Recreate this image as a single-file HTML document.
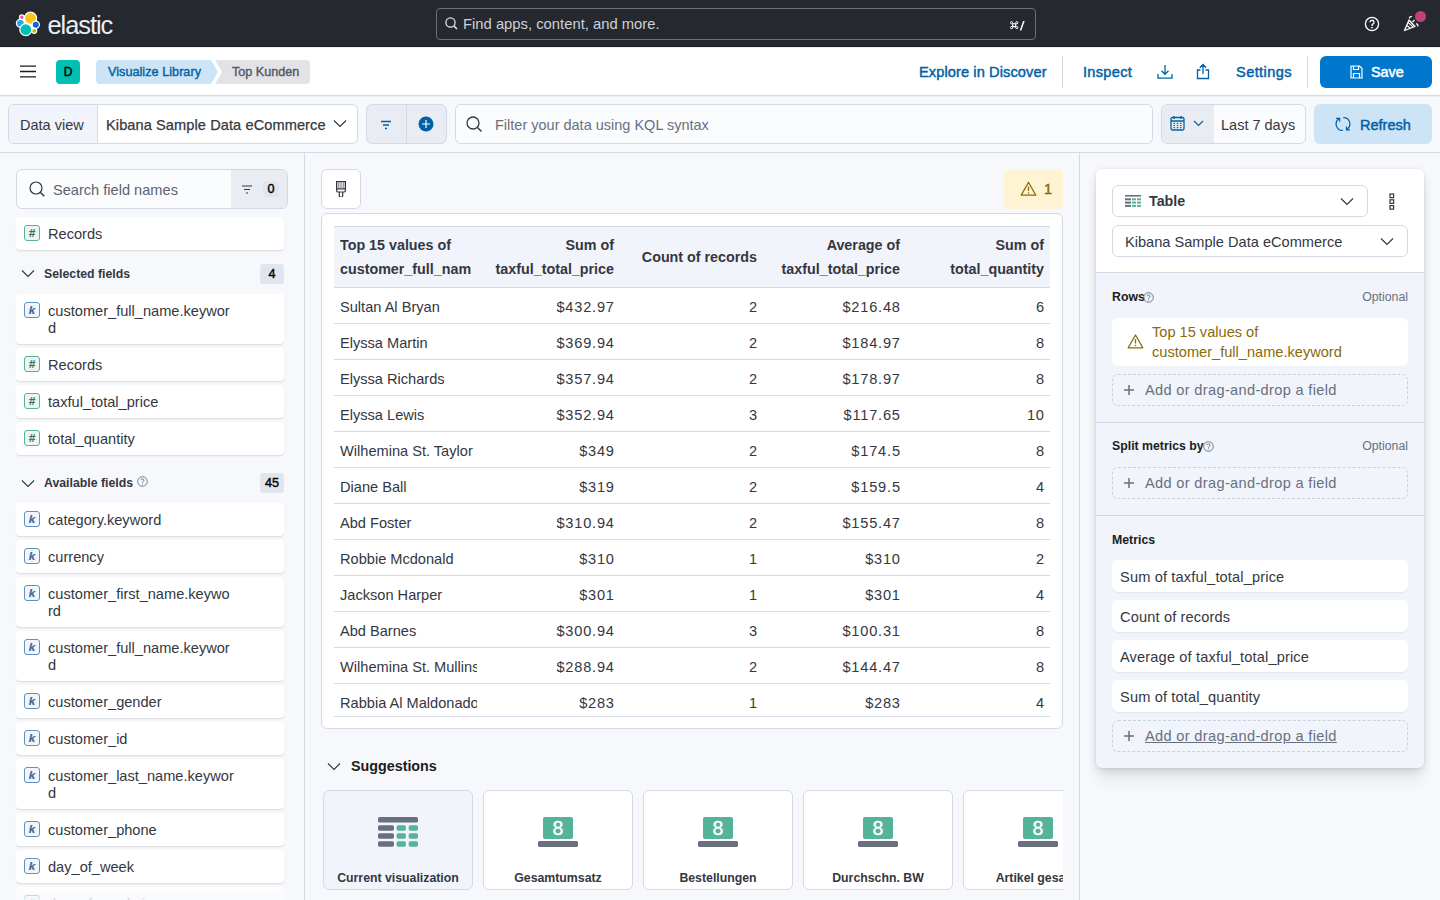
<!DOCTYPE html>
<html><head><meta charset="utf-8">
<style>
*{box-sizing:border-box;margin:0;padding:0}
html,body{width:1440px;height:900px;overflow:hidden;background:#f7f8fc;font-family:"Liberation Sans",sans-serif;color:#343741;font-size:14px}
.a{position:absolute}
.nw{white-space:nowrap}
svg{display:block}
/* header */
#hdr{left:0;top:0;width:1440px;height:46px;background:#25282f}
#hdrb{left:0;top:46px;width:1440px;height:1px;background:#1a1c21}
#hdrs{left:0;top:47px;width:1440px;height:1px;background:#eef1f8}
#appbar{left:0;top:48px;width:1440px;height:47px;background:#fff}
#appbb{left:0;top:95px;width:1440px;height:1px;background:#d3dae6}
#appbs{left:0;top:96px;width:1440px;height:1px;background:#eceef2}
#qbb{left:0;top:152px;width:1440px;height:1px;background:#d3dae6}
.link{color:#0061a6;font-weight:400;font-size:14.6px;-webkit-text-stroke-width:.45px}
.med{font-weight:400;-webkit-text-stroke-width:.45px}
.vdiv{width:1px;background:#d3dae6}
.box{border:1px solid #d3dae6;border-radius:6px}
</style>
<style>
.fi{position:absolute;left:16px;width:268px;background:#fff;border-radius:4px;box-shadow:0 1px 1px rgba(0,0,0,.09),0 2px 2px rgba(0,0,0,.025)}
.fi .ic{position:absolute;left:8px;top:8px;width:16px;height:16px;border-radius:3px;font-weight:700;font-style:italic;text-align:center;line-height:14px;font-size:11.5px;-webkit-text-stroke-width:.2px}
.ick{border:1px solid #6092c0;background:#f1f6fb;color:#3f6a98}
.ich{border:1px solid #54b399;background:#eef6f3;color:#387765}
.fi .tx{position:absolute;left:32px;top:9px;font-size:14.6px;line-height:17px;color:#343741;white-space:nowrap}
.sh{position:absolute;font-size:12.3px;font-weight:700;color:#343741;line-height:16px;white-space:nowrap}
.th{position:absolute;font-size:14.3px;font-weight:700;line-height:24px;color:#343741;white-space:nowrap}
.td{position:absolute;font-size:14.6px;line-height:17px;color:#343741;white-space:nowrap}
.badge{position:absolute;height:20px;border-radius:3px;background:#e0e5ee;font-size:12.6px;font-weight:400;-webkit-text-stroke-width:.4px;color:#000;text-align:center;line-height:20px}
</style>
</head><body>
<!-- ===== top dark header ===== -->
<div id="hdr" class="a"></div><div id="hdrb" class="a"></div><div id="hdrs" class="a"></div>
<svg class="a" style="left:14px;top:10px" width="28" height="28" viewBox="0 0 28 28">
 <circle cx="14.5" cy="14.5" r="7" fill="#fff"/>
 <g stroke="#fff" stroke-width="1.2">
 <circle cx="16.5" cy="8.3" r="6.1" fill="#fec514"/>
 <circle cx="7.8" cy="7.2" r="2.3" fill="#f04e98"/>
 <circle cx="6.4" cy="13.3" r="4" fill="#1ba9f5"/>
 <circle cx="21.8" cy="14.7" r="3.6" fill="#0b64dd"/>
 <circle cx="11.8" cy="19.7" r="6" fill="#00bfb3"/>
 <circle cx="20.2" cy="20.8" r="2.5" fill="#93c90e"/>
 </g>
</svg>
<div class="a nw" style="left:47.5px;top:11px;font-size:25.4px;color:#eceef1;letter-spacing:-1.05px;font-weight:400">elastic</div>
<div class="a box" style="left:436px;top:8px;width:600px;height:32px;border-color:#6b6f78;border-radius:4px;background:#25282f"></div>
<svg class="a" style="left:445px;top:17px" width="13" height="13" viewBox="0 0 13 13"><circle cx="5.5" cy="5.5" r="4.6" fill="none" stroke="#dfe5ef" stroke-width="1.3"/><path d="M9 9 L12 12" stroke="#dfe5ef" stroke-width="1.6"/></svg>
<div class="a nw" style="left:463px;top:16px;font-size:14.8px;color:#cdd1d9">Find apps, content, and more.</div>
<svg class="a" style="left:1009.5px;top:20.5px" width="16" height="10" viewBox="0 0 16 10"><path d="M2.7 2.7h3v2.9h-3z" fill="none" stroke="#fff" stroke-width="1.1"/><circle cx="1.6" cy="1.7" r="1.1" fill="none" stroke="#fff" stroke-width="1"/><circle cx="6.8" cy="1.7" r="1.1" fill="none" stroke="#fff" stroke-width="1"/><circle cx="1.6" cy="6.6" r="1.1" fill="none" stroke="#fff" stroke-width="1"/><circle cx="6.8" cy="6.6" r="1.1" fill="none" stroke="#fff" stroke-width="1"/><path d="M10.5 9.6 14 -.2" stroke="#fff" stroke-width="1.5"/></svg>
<svg class="a" style="left:1364px;top:16px" width="16" height="16" viewBox="0 0 16 16"><circle cx="8" cy="8" r="6.6" fill="none" stroke="#fff" stroke-width="1.3"/><path d="M6 6.3a2 2 0 1 1 2.8 1.8c-.5.3-.8.6-.8 1.2v.6" fill="none" stroke="#fff" stroke-width="1.3"/><circle cx="8" cy="11.6" r=".9" fill="#fff"/></svg>
<svg class="a" style="left:1403px;top:15px" width="18" height="17" viewBox="0 0 18 17"><path d="M1.5 15.5 L6 5 L12 11.5 Z" fill="none" stroke="#fff" stroke-width="1.3" stroke-linejoin="round"/><path d="M4 10.5l3.5 3M5.3 7.5l4.6 4.4" stroke="#fff" stroke-width="1.1"/><path d="M6.5 3.5a1.5 1.5 0 0 1 2.5-1.5M13 9a1.5 1.5 0 0 1 1.5 2.5M9.5 7l2-2" fill="none" stroke="#fff" stroke-width="1.2"/></svg>
<div class="a" style="left:1415px;top:11px;width:11px;height:11px;border-radius:50%;background:#c4407c"></div>

<!-- ===== app bar ===== -->
<div id="appbar" class="a"></div><div id="appbb" class="a"></div><div id="appbs" class="a"></div>
<svg class="a" style="left:20px;top:65px" width="16" height="13" viewBox="0 0 16 13"><path d="M0 1.2h16M0 6.5h16M0 11.8h16" stroke="#1a1c21" stroke-width="1.3"/></svg>
<div class="a" style="left:56px;top:60px;width:24px;height:24px;border-radius:4px;background:#00bfb3;color:#000;font-size:12px;font-weight:400;-webkit-text-stroke-width:.45px;text-align:center;line-height:24px">D</div>
<svg class="a" style="left:96px;top:60px" width="216" height="24" viewBox="0 0 216 24">
 <path d="M4 0 H115 L122 12 L115 24 H4 A4 4 0 0 1 0 20 V4 A4 4 0 0 1 4 0Z" fill="#cce4f5"/>
 <path d="M119 0 H210 A4 4 0 0 1 214 4 V20 A4 4 0 0 1 210 24 H119 L126 12 Z" fill="#e2e3e7"/>
</svg>
<div class="a nw" style="left:108px;top:65px;font-size:12.6px;font-weight:400;-webkit-text-stroke-width:.4px;color:#0061a6;letter-spacing:.05px">Visualize Library</div>
<div class="a nw" style="left:232px;top:65px;font-size:12.6px;font-weight:400;-webkit-text-stroke-width:.4px;color:#535966">Top Kunden</div>

<div class="a nw link" style="left:919px;top:64px;letter-spacing:.1px">Explore in Discover</div>
<div class="a vdiv" style="left:1062px;top:56px;height:32px"></div>
<div class="a nw link" style="left:1083px;top:64px;letter-spacing:.3px">Inspect</div>
<svg class="a" style="left:1157px;top:64px" width="16" height="16" viewBox="0 0 16 16"><path d="M8 1v9M4.5 6.8 8 10.3l3.5-3.5M1 10v4.2h14V10" fill="none" stroke="#0061a6" stroke-width="1.3"/></svg>
<svg class="a" style="left:1196px;top:63px" width="14" height="17" viewBox="0 0 14 17"><path d="M7 11V1.5M3.8 4.7 7 1.5l3.2 3.2M4.5 7H1.5v8.5h11V7H9.5" fill="none" stroke="#0061a6" stroke-width="1.3"/></svg>
<div class="a nw link" style="left:1236px;top:64px;letter-spacing:.4px">Settings</div>
<div class="a vdiv" style="left:1307px;top:56px;height:32px"></div>
<div class="a" style="left:1320px;top:56px;width:112px;height:32px;background:#0077cc;border-radius:6px"></div>
<svg class="a" style="left:1350px;top:65px" width="13" height="14" viewBox="0 0 13 14"><path d="M1 1h8.5l2.5 2.5V13H1z M3.5 1v3.5h5V1 M3.5 13V8.5h6V13" fill="none" stroke="#fff" stroke-width="1.2"/></svg>
<div class="a nw" style="left:1371px;top:64px;font-size:14.4px;font-weight:400;-webkit-text-stroke-width:.5px;color:#fff">Save</div>

<!-- ===== query bar ===== -->
<div id="qbb" class="a"></div>
<div class="a box" style="left:8px;top:104px;width:350px;height:40px;background:#fff;overflow:hidden">
 <div class="a" style="left:0;top:0;width:89px;height:38px;background:#f1f4fa;border-right:1px solid #d3dae6"></div>
</div>
<div class="a nw" style="left:20px;top:116.5px;font-size:14.5px;color:#343741">Data view</div>
<div class="a nw" style="left:106px;top:116.5px;font-size:14.6px;color:#343741;font-weight:400;-webkit-text-stroke-width:.25px;letter-spacing:.08px">Kibana Sample Data eCommerce</div>
<svg class="a" style="left:333px;top:119px" width="14" height="9" viewBox="0 0 14 9"><path d="M1 1.5l6 6 6-6" fill="none" stroke="#343741" stroke-width="1.2"/></svg>
<div class="a box" style="left:366px;top:104px;width:81px;height:40px;background:#e9edf3;overflow:hidden">
 <div class="a" style="left:39px;top:0;width:1px;height:38px;background:#d3dae6"></div>
</div>
<svg class="a" style="left:380px;top:120px" width="12" height="10" viewBox="0 0 12 10"><path d="M1 1.5h10M3 5h6M5 8.5h2" stroke="#0061a6" stroke-width="1.3"/></svg>
<svg class="a" style="left:418px;top:116px" width="16" height="16" viewBox="0 0 16 16"><circle cx="8" cy="8" r="7.5" fill="#0061a6"/><path d="M8 4v8M4 8h8" stroke="#fff" stroke-width="1.2"/></svg>
<div class="a box" style="left:455px;top:104px;width:698px;height:40px;background:#fbfcfd"></div>
<svg class="a" style="left:466px;top:116px" width="17" height="17" viewBox="0 0 17 17"><circle cx="7" cy="7" r="6" fill="none" stroke="#343741" stroke-width="1.3"/><path d="M11.5 11.5l4 4" stroke="#343741" stroke-width="1.5"/></svg>
<div class="a nw" style="left:495px;top:117px;font-size:14.5px;color:#69707d">Filter your data using KQL syntax</div>
<div class="a box" style="left:1161px;top:104px;width:145px;height:40px;background:#fbfcfd;overflow:hidden">
 <div class="a" style="left:0;top:0;width:52px;height:38px;background:#e9edf3;border-right:1px solid #e9edf3"></div>
</div>
<svg class="a" style="left:1170px;top:115px" width="15" height="16" viewBox="0 0 15 16"><rect x="1" y="2.5" width="13" height="12.5" rx="1.5" fill="none" stroke="#0061a6" stroke-width="1.3"/><path d="M1 6h13M4 1v3M11 1v3" stroke="#0061a6" stroke-width="1.3"/><path d="M3.5 8.3h1.5M6.8 8.3h1.5M10 8.3h1.5M3.5 10.5h1.5M6.8 10.5h1.5M10 10.5h1.5M3.5 12.7h1.5M6.8 12.7h1.5M10 12.7h1.5" stroke="#0061a6" stroke-width="1.2"/></svg>
<svg class="a" style="left:1193px;top:120px" width="11" height="7" viewBox="0 0 11 7"><path d="M1 1l4.5 4.5L10 1" fill="none" stroke="#0061a6" stroke-width="1.2"/></svg>
<div class="a nw" style="left:1221px;top:117px;font-size:14.5px;color:#343741">Last 7 days</div>
<div class="a" style="left:1314px;top:104px;width:118px;height:40px;background:#cce4f5;border-radius:6px"></div>
<svg class="a" style="left:1335px;top:116px" width="16" height="16" viewBox="0 0 16 16"><path d="M4.4 2.6A6.3 6.3 0 0 0 7.8 14.4M1.1 2.4h3.6v3.3" fill="none" stroke="#0061a6" stroke-width="1.15"/><path d="M8.3 1.6A6.3 6.3 0 0 1 11.6 13.4M15 13.8h-3.5v-3.4" fill="none" stroke="#0061a6" stroke-width="1.15"/></svg>
<div class="a nw link" style="left:1360px;top:117px;font-size:14.5px">Refresh</div>

<!-- LEFT -->
<div class="a box" style="left:16px;top:169px;width:272px;height:40px;background:#fbfcfd;overflow:hidden"><div class="a" style="left:214px;top:0;width:58px;height:38px;background:#e9edf3"></div></div>
<svg class="a" style="left:29px;top:181px" width="17" height="17" viewBox="0 0 17 17"><circle cx="7" cy="7" r="6" fill="none" stroke="#343741" stroke-width="1.2"/><path d="M11.3 11.3l4 4" stroke="#343741" stroke-width="1.5"/></svg>
<div class="a nw" style="left:53px;top:182px;font-size:14.6px;color:#5e6473">Search field names</div>
<svg class="a" style="left:241px;top:185px" width="12" height="9" viewBox="0 0 12 9"><path d="M1 1h10M3 4.5h6M5 8h2" stroke="#343741" stroke-width="1.1"/></svg>
<div class="a" style="left:263px;top:181px;width:16px;height:16px;border-radius:3px;background:#e0e5ee;font-size:12.6px;font-weight:400;-webkit-text-stroke-width:.4px;color:#000;text-align:center;line-height:16px">0</div>
<div class="fi" style="top:217px;height:33px"><div class="ic ich">#</div><div class="tx">Records</div></div>
<svg class="a" style="left:21px;top:269px" width="14" height="9" viewBox="0 0 14 9"><path d="M1 1.5l6 6 6-6" fill="none" stroke="#343741" stroke-width="1.1"/></svg>
<div class="sh" style="left:44px;top:266px">Selected fields</div>
<div class="badge" style="left:260px;top:264px;width:24px">4</div>
<div class="fi" style="top:294px;height:50px"><div class="ic ick">k</div><div class="tx">customer_full_name.keywor<br>d</div></div>
<div class="fi" style="top:348px;height:33px"><div class="ic ich">#</div><div class="tx">Records</div></div>
<div class="fi" style="top:385px;height:33px"><div class="ic ich">#</div><div class="tx">taxful_total_price</div></div>
<div class="fi" style="top:422px;height:33px"><div class="ic ich">#</div><div class="tx">total_quantity</div></div>
<svg class="a" style="left:21px;top:479px" width="14" height="9" viewBox="0 0 14 9"><path d="M1 1.5l6 6 6-6" fill="none" stroke="#343741" stroke-width="1.1"/></svg>
<div class="sh" style="left:44px;top:475px">Available fields</div>
<svg class="a" style="left:137px;top:476px" width="11" height="11" viewBox="0 0 11 11"><circle cx="5.5" cy="5.5" r="4.8" fill="none" stroke="#69707d" stroke-width=".9"/><path d="M4 4.3a1.5 1.5 0 1 1 2 1.4c-.3.2-.5.4-.5.8v.4" fill="none" stroke="#69707d" stroke-width=".9"/><circle cx="5.5" cy="8" r=".55" fill="#69707d"/></svg>
<div class="badge" style="left:260px;top:473px;width:24px">45</div>
<div class="fi" style="top:503px;height:33px"><div class="ic ick">k</div><div class="tx">category.keyword</div></div>
<div class="fi" style="top:540px;height:33px"><div class="ic ick">k</div><div class="tx">currency</div></div>
<div class="fi" style="top:577px;height:50px"><div class="ic ick">k</div><div class="tx">customer_first_name.keywo<br>rd</div></div>
<div class="fi" style="top:631px;height:50px"><div class="ic ick">k</div><div class="tx">customer_full_name.keywor<br>d</div></div>
<div class="fi" style="top:685px;height:33px"><div class="ic ick">k</div><div class="tx">customer_gender</div></div>
<div class="fi" style="top:722px;height:33px"><div class="ic ick">k</div><div class="tx">customer_id</div></div>
<div class="fi" style="top:759px;height:50px"><div class="ic ick">k</div><div class="tx">customer_last_name.keywor<br>d</div></div>
<div class="fi" style="top:813px;height:33px"><div class="ic ick">k</div><div class="tx">customer_phone</div></div>
<div class="fi" style="top:850px;height:33px"><div class="ic ick">k</div><div class="tx">day_of_week</div></div>
<div class="fi" style="top:887px;height:33px"><div class="ic ich">#</div><div class="tx">day_of_week_i</div></div>
<div class="a" style="left:0;top:884px;width:304px;height:16px;background:linear-gradient(rgba(248,249,252,0),rgba(248,249,252,.85))"></div>
<div class="a vdiv" style="left:304px;top:153px;height:747px"></div>
<!-- CENTER -->
<div class="a box" style="left:321px;top:169px;width:40px;height:40px;background:#fff"></div>
<svg class="a" style="left:336px;top:181px" width="10" height="16" viewBox="0 0 10 16"><path d="M.6.6h8.8v7.2H.6z" fill="none" stroke="#343741" stroke-width="1.2"/><path d="M.6 7.8v1.6c0 1 .8 1.6 1.6 1.6h5.6c.8 0 1.6-.6 1.6-1.6V7.8" fill="none" stroke="#343741" stroke-width="1.2"/><path d="M3.3 11v3.6a1.7 1.7 0 0 0 3.4 0V11" fill="none" stroke="#343741" stroke-width="1.2"/><path d="M2.3 1.5v5.5M4.1 1.5v5.5M5.9 1.5v5.5M7.7 1.5v5.5" stroke="#343741" stroke-width=".6"/></svg>
<div class="a" style="left:1004px;top:169px;width:59px;height:40px;background:#fef3d3;border-radius:6px"></div>
<svg class="a" style="left:1020px;top:181px" width="17" height="16" viewBox="0 0 17 16"><path d="M8.5 1.3 1.2 14.2h14.6z" fill="none" stroke="#8a6a0a" stroke-width="1.3" stroke-linejoin="round"/><path d="M8.5 5.5v4.5" stroke="#8a6a0a" stroke-width="1.3"/><circle cx="8.5" cy="12" r=".8" fill="#8a6a0a"/></svg>
<div class="a nw" style="left:1044px;top:181px;font-size:14.6px;color:#8a6a0a;font-weight:400;-webkit-text-stroke-width:.45px">1</div>
<div class="a box" style="left:321px;top:213px;width:742px;height:516px;background:#fff"></div>
<div class="a" style="left:334px;top:226px;width:716px;height:62px;background:#f1f4fa;border-top:1px solid #d3dae6;border-bottom:1px solid #d3dae6"></div>
<div class="th" style="left:340px;top:233px;width:143px;overflow:hidden">Top 15 values of<br>customer_full_nam</div>
<div class="th" style="left:483px;top:233px;width:131px;text-align:right">Sum of<br>taxful_total_price</div>
<div class="th" style="left:620px;top:245px;width:137px;text-align:right">Count of records</div>
<div class="th" style="left:763px;top:233px;width:137px;text-align:right">Average of<br>taxful_total_price</div>
<div class="th" style="left:906px;top:233px;width:138px;text-align:right">Sum of<br>total_quantity</div>
<div class="a" style="left:334px;top:323px;width:716px;height:1px;background:#d3dae6"></div>
<div class="td" style="left:340px;top:299px;width:137px;overflow:hidden">Sultan Al Bryan</div>
<div class="td" style="left:483px;top:299px;width:131.8px;text-align:right;letter-spacing:.8px">$432.97</div>
<div class="td" style="left:620px;top:299px;width:137.8px;text-align:right;letter-spacing:.8px">2</div>
<div class="td" style="left:763px;top:299px;width:137.8px;text-align:right;letter-spacing:.8px">$216.48</div>
<div class="td" style="left:906px;top:299px;width:138.8px;text-align:right;letter-spacing:.8px">6</div>
<div class="a" style="left:334px;top:359px;width:716px;height:1px;background:#d3dae6"></div>
<div class="td" style="left:340px;top:335px;width:137px;overflow:hidden">Elyssa Martin</div>
<div class="td" style="left:483px;top:335px;width:131.8px;text-align:right;letter-spacing:.8px">$369.94</div>
<div class="td" style="left:620px;top:335px;width:137.8px;text-align:right;letter-spacing:.8px">2</div>
<div class="td" style="left:763px;top:335px;width:137.8px;text-align:right;letter-spacing:.8px">$184.97</div>
<div class="td" style="left:906px;top:335px;width:138.8px;text-align:right;letter-spacing:.8px">8</div>
<div class="a" style="left:334px;top:395px;width:716px;height:1px;background:#d3dae6"></div>
<div class="td" style="left:340px;top:371px;width:137px;overflow:hidden">Elyssa Richards</div>
<div class="td" style="left:483px;top:371px;width:131.8px;text-align:right;letter-spacing:.8px">$357.94</div>
<div class="td" style="left:620px;top:371px;width:137.8px;text-align:right;letter-spacing:.8px">2</div>
<div class="td" style="left:763px;top:371px;width:137.8px;text-align:right;letter-spacing:.8px">$178.97</div>
<div class="td" style="left:906px;top:371px;width:138.8px;text-align:right;letter-spacing:.8px">8</div>
<div class="a" style="left:334px;top:431px;width:716px;height:1px;background:#d3dae6"></div>
<div class="td" style="left:340px;top:407px;width:137px;overflow:hidden">Elyssa Lewis</div>
<div class="td" style="left:483px;top:407px;width:131.8px;text-align:right;letter-spacing:.8px">$352.94</div>
<div class="td" style="left:620px;top:407px;width:137.8px;text-align:right;letter-spacing:.8px">3</div>
<div class="td" style="left:763px;top:407px;width:137.8px;text-align:right;letter-spacing:.8px">$117.65</div>
<div class="td" style="left:906px;top:407px;width:138.8px;text-align:right;letter-spacing:.8px">10</div>
<div class="a" style="left:334px;top:467px;width:716px;height:1px;background:#d3dae6"></div>
<div class="td" style="left:340px;top:443px;width:137px;overflow:hidden">Wilhemina St. Taylor</div>
<div class="td" style="left:483px;top:443px;width:131.8px;text-align:right;letter-spacing:.8px">$349</div>
<div class="td" style="left:620px;top:443px;width:137.8px;text-align:right;letter-spacing:.8px">2</div>
<div class="td" style="left:763px;top:443px;width:137.8px;text-align:right;letter-spacing:.8px">$174.5</div>
<div class="td" style="left:906px;top:443px;width:138.8px;text-align:right;letter-spacing:.8px">8</div>
<div class="a" style="left:334px;top:503px;width:716px;height:1px;background:#d3dae6"></div>
<div class="td" style="left:340px;top:479px;width:137px;overflow:hidden">Diane Ball</div>
<div class="td" style="left:483px;top:479px;width:131.8px;text-align:right;letter-spacing:.8px">$319</div>
<div class="td" style="left:620px;top:479px;width:137.8px;text-align:right;letter-spacing:.8px">2</div>
<div class="td" style="left:763px;top:479px;width:137.8px;text-align:right;letter-spacing:.8px">$159.5</div>
<div class="td" style="left:906px;top:479px;width:138.8px;text-align:right;letter-spacing:.8px">4</div>
<div class="a" style="left:334px;top:539px;width:716px;height:1px;background:#d3dae6"></div>
<div class="td" style="left:340px;top:515px;width:137px;overflow:hidden">Abd Foster</div>
<div class="td" style="left:483px;top:515px;width:131.8px;text-align:right;letter-spacing:.8px">$310.94</div>
<div class="td" style="left:620px;top:515px;width:137.8px;text-align:right;letter-spacing:.8px">2</div>
<div class="td" style="left:763px;top:515px;width:137.8px;text-align:right;letter-spacing:.8px">$155.47</div>
<div class="td" style="left:906px;top:515px;width:138.8px;text-align:right;letter-spacing:.8px">8</div>
<div class="a" style="left:334px;top:575px;width:716px;height:1px;background:#d3dae6"></div>
<div class="td" style="left:340px;top:551px;width:137px;overflow:hidden">Robbie Mcdonald</div>
<div class="td" style="left:483px;top:551px;width:131.8px;text-align:right;letter-spacing:.8px">$310</div>
<div class="td" style="left:620px;top:551px;width:137.8px;text-align:right;letter-spacing:.8px">1</div>
<div class="td" style="left:763px;top:551px;width:137.8px;text-align:right;letter-spacing:.8px">$310</div>
<div class="td" style="left:906px;top:551px;width:138.8px;text-align:right;letter-spacing:.8px">2</div>
<div class="a" style="left:334px;top:611px;width:716px;height:1px;background:#d3dae6"></div>
<div class="td" style="left:340px;top:587px;width:137px;overflow:hidden">Jackson Harper</div>
<div class="td" style="left:483px;top:587px;width:131.8px;text-align:right;letter-spacing:.8px">$301</div>
<div class="td" style="left:620px;top:587px;width:137.8px;text-align:right;letter-spacing:.8px">1</div>
<div class="td" style="left:763px;top:587px;width:137.8px;text-align:right;letter-spacing:.8px">$301</div>
<div class="td" style="left:906px;top:587px;width:138.8px;text-align:right;letter-spacing:.8px">4</div>
<div class="a" style="left:334px;top:647px;width:716px;height:1px;background:#d3dae6"></div>
<div class="td" style="left:340px;top:623px;width:137px;overflow:hidden">Abd Barnes</div>
<div class="td" style="left:483px;top:623px;width:131.8px;text-align:right;letter-spacing:.8px">$300.94</div>
<div class="td" style="left:620px;top:623px;width:137.8px;text-align:right;letter-spacing:.8px">3</div>
<div class="td" style="left:763px;top:623px;width:137.8px;text-align:right;letter-spacing:.8px">$100.31</div>
<div class="td" style="left:906px;top:623px;width:138.8px;text-align:right;letter-spacing:.8px">8</div>
<div class="a" style="left:334px;top:683px;width:716px;height:1px;background:#d3dae6"></div>
<div class="td" style="left:340px;top:659px;width:137px;overflow:hidden">Wilhemina St. Mullins</div>
<div class="td" style="left:483px;top:659px;width:131.8px;text-align:right;letter-spacing:.8px">$288.94</div>
<div class="td" style="left:620px;top:659px;width:137.8px;text-align:right;letter-spacing:.8px">2</div>
<div class="td" style="left:763px;top:659px;width:137.8px;text-align:right;letter-spacing:.8px">$144.47</div>
<div class="td" style="left:906px;top:659px;width:138.8px;text-align:right;letter-spacing:.8px">8</div>
<div class="a" style="left:334px;top:716px;width:716px;height:1px;background:#d3dae6"></div>
<div class="td" style="left:340px;top:695px;width:137px;overflow:hidden">Rabbia Al Maldonado</div>
<div class="td" style="left:483px;top:695px;width:131.8px;text-align:right;letter-spacing:.8px">$283</div>
<div class="td" style="left:620px;top:695px;width:137.8px;text-align:right;letter-spacing:.8px">1</div>
<div class="td" style="left:763px;top:695px;width:137.8px;text-align:right;letter-spacing:.8px">$283</div>
<div class="td" style="left:906px;top:695px;width:138.8px;text-align:right;letter-spacing:.8px">4</div>
<svg class="a" style="left:327px;top:762px" width="14" height="9" viewBox="0 0 14 9"><path d="M1 1.5l6 6 6-6" fill="none" stroke="#343741" stroke-width="1.1"/></svg>
<div class="a nw" style="left:351px;top:758px;font-size:14.3px;font-weight:700;color:#1a1c21">Suggestions</div>
<div class="a" style="left:306px;top:780px;width:757px;height:120px;overflow:hidden">
<div class="a" style="left:17px;top:10px;width:150px;height:100px;border:1px solid #d3dae6;border-radius:6px;background:#f1f4fa"></div>
<svg class="a" style="left:72px;top:37px" width="40" height="30" viewBox="0 0 40 30"><rect x="0" y="0" width="40" height="5.6" rx="1.6" fill="#69707d"/><rect x="0" y="8.3" width="16" height="5.4" rx="1.6" fill="#69707d"/><rect x="18.6" y="8.3" width="9.3" height="5.4" rx="1.6" fill="#54b399"/><rect x="30.7" y="8.3" width="9.3" height="5.4" rx="1.6" fill="#54b399"/><rect x="0" y="16.3" width="16" height="5.4" rx="1.6" fill="#69707d"/><rect x="18.6" y="16.3" width="9.3" height="5.4" rx="1.6" fill="#54b399"/><rect x="30.7" y="16.3" width="9.3" height="5.4" rx="1.6" fill="#54b399"/><rect x="0" y="24.3" width="16" height="5.4" rx="1.6" fill="#69707d"/><rect x="18.6" y="24.3" width="9.3" height="5.4" rx="1.6" fill="#54b399"/><rect x="30.7" y="24.3" width="9.3" height="5.4" rx="1.6" fill="#54b399"/></svg>
<div class="a nw" style="left:17px;top:91px;width:150px;text-align:center;font-size:12.3px;font-weight:700;color:#343741">Current visualization</div>
<div class="a" style="left:177px;top:10px;width:150px;height:100px;border:1px solid #d3dae6;border-radius:6px;background:#fff"></div>
<div class="a" style="left:237px;top:37px;width:30px;height:22px;border-radius:2px;background:#54b399;color:#fff;font-size:19.5px;line-height:22px;text-align:center;-webkit-text-stroke-width:.35px">8</div>
<div class="a" style="left:232px;top:61px;width:40px;height:6px;border-radius:1.5px;background:#69707d"></div>
<div class="a nw" style="left:177px;top:91px;width:150px;text-align:center;font-size:12.3px;font-weight:700;color:#343741">Gesamtumsatz</div>
<div class="a" style="left:337px;top:10px;width:150px;height:100px;border:1px solid #d3dae6;border-radius:6px;background:#fff"></div>
<div class="a" style="left:397px;top:37px;width:30px;height:22px;border-radius:2px;background:#54b399;color:#fff;font-size:19.5px;line-height:22px;text-align:center;-webkit-text-stroke-width:.35px">8</div>
<div class="a" style="left:392px;top:61px;width:40px;height:6px;border-radius:1.5px;background:#69707d"></div>
<div class="a nw" style="left:337px;top:91px;width:150px;text-align:center;font-size:12.3px;font-weight:700;color:#343741">Bestellungen</div>
<div class="a" style="left:497px;top:10px;width:150px;height:100px;border:1px solid #d3dae6;border-radius:6px;background:#fff"></div>
<div class="a" style="left:557px;top:37px;width:30px;height:22px;border-radius:2px;background:#54b399;color:#fff;font-size:19.5px;line-height:22px;text-align:center;-webkit-text-stroke-width:.35px">8</div>
<div class="a" style="left:552px;top:61px;width:40px;height:6px;border-radius:1.5px;background:#69707d"></div>
<div class="a nw" style="left:497px;top:91px;width:150px;text-align:center;font-size:12.3px;font-weight:700;color:#343741">Durchschn. BW</div>
<div class="a" style="left:657px;top:10px;width:150px;height:100px;border:1px solid #d3dae6;border-radius:6px;background:#fff"></div>
<div class="a" style="left:717px;top:37px;width:30px;height:22px;border-radius:2px;background:#54b399;color:#fff;font-size:19.5px;line-height:22px;text-align:center;-webkit-text-stroke-width:.35px">8</div>
<div class="a" style="left:712px;top:61px;width:40px;height:6px;border-radius:1.5px;background:#69707d"></div>
<div class="a nw" style="left:657px;top:91px;width:150px;text-align:center;font-size:12.3px;font-weight:700;color:#343741">Artikel gesamt</div>
</div>
<div class="a vdiv" style="left:1079px;top:153px;height:747px"></div>
<!-- RIGHT -->
<div class="a" style="left:1096px;top:169px;width:328px;height:599px;background:#f1f4fa;border-radius:6px;box-shadow:0 .9px 4px -1px rgba(0,0,0,.1),0 2.6px 8px -1px rgba(0,0,0,.08),0 5.7px 12px -1px rgba(0,0,0,.06),0 15px 15px -1px rgba(0,0,0,.05);overflow:hidden"><div class="a" style="left:0;top:0;width:328px;height:104px;background:#fff;border-bottom:1px solid #d3dae6"></div><div class="a" style="left:0;top:253px;width:328px;height:1px;background:#d3dae6"></div><div class="a" style="left:0;top:346px;width:328px;height:1px;background:#d3dae6"></div></div>
<div class="a box" style="left:1112px;top:185px;width:256px;height:32px;background:#fff"></div>
<svg class="a" style="left:1125px;top:195px" width="16" height="12" viewBox="0 0 16 12"><rect x="0" y="0" width="16" height="1.6" fill="#69707d"/><rect x="0" y="3.3" width="6" height="2" fill="#69707d"/><rect x="7" y="3.3" width="4" height="2" fill="#54b399"/><rect x="12" y="3.3" width="4" height="2" fill="#54b399"/><rect x="0" y="6.6" width="6" height="2" fill="#69707d"/><rect x="7" y="6.6" width="4" height="2" fill="#54b399"/><rect x="12" y="6.6" width="4" height="2" fill="#54b399"/><rect x="0" y="9.9" width="6" height="2" fill="#69707d"/><rect x="7" y="9.9" width="4" height="2" fill="#54b399"/><rect x="12" y="9.9" width="4" height="2" fill="#54b399"/></svg>
<div class="a nw" style="left:1149px;top:193px;font-size:14.3px;font-weight:700;color:#343741">Table</div>
<svg class="a" style="left:1340px;top:197px" width="14" height="9" viewBox="0 0 14 9"><path d="M1 1.5l6 6 6-6" fill="none" stroke="#343741" stroke-width="1.2"/></svg>
<svg class="a" style="left:1389px;top:193px" width="6" height="17" viewBox="0 0 6 17"><rect x="1" y="1" width="3.6" height="3.6" fill="none" stroke="#343741" stroke-width="1.2"/><rect x="1" y="6.8" width="3.6" height="3.6" fill="none" stroke="#343741" stroke-width="1.2"/><rect x="1" y="12.6" width="3.6" height="3.6" fill="none" stroke="#343741" stroke-width="1.2"/></svg>
<div class="a box" style="left:1112px;top:225px;width:296px;height:32px;background:#fff"></div>
<div class="a nw" style="left:1125px;top:234px;font-size:14.6px;color:#343741">Kibana Sample Data eCommerce</div>
<svg class="a" style="left:1380px;top:237px" width="14" height="9" viewBox="0 0 14 9"><path d="M1 1.5l6 6 6-6" fill="none" stroke="#343741" stroke-width="1.2"/></svg>
<div class="a nw" style="left:1112px;top:290px;font-size:12.3px;font-weight:700;color:#1a1c21">Rows</div>
<svg class="a" style="left:1143px;top:292px" width="11" height="11" viewBox="0 0 11 11"><circle cx="5.5" cy="5.5" r="4.8" fill="none" stroke="#69707d" stroke-width=".9"/><path d="M4 4.3a1.5 1.5 0 1 1 2 1.4c-.3.2-.5.4-.5.8v.4" fill="none" stroke="#69707d" stroke-width=".9"/><circle cx="5.5" cy="8" r=".55" fill="#69707d"/></svg>
<div class="a nw" style="left:1300px;top:290px;width:108px;text-align:right;font-size:12.3px;color:#69707d">Optional</div>
<div class="a" style="left:1112px;top:318px;width:296px;height:48px;background:#fff;border-radius:6px"></div>
<svg class="a" style="left:1127px;top:334px" width="17" height="15" viewBox="0 0 17 15"><path d="M8.5 1 1.2 13.8h14.6z" fill="none" stroke="#8a6a0a" stroke-width="1.3" stroke-linejoin="round"/><path d="M8.5 5v4.5" stroke="#8a6a0a" stroke-width="1.3"/><circle cx="8.5" cy="11.5" r=".8" fill="#8a6a0a"/></svg>
<div class="a nw" style="left:1152px;top:322px;font-size:14.6px;line-height:20px;color:#8a6a0a">Top 15 values of<br>customer_full_name.keyword</div>
<div class="a" style="left:1112px;top:374px;width:296px;height:32px;border:1px dashed #c9d1de;border-radius:6px"></div>
<svg class="a" style="left:1124px;top:385px" width="10" height="10" viewBox="0 0 10 10"><path d="M5 0v10M0 5h10" stroke="#69707d" stroke-width="1.5"/></svg>
<div class="a nw" style="left:1145px;top:382px;font-size:14.6px;color:#69707d;letter-spacing:.33px;">Add or drag-and-drop a field</div>
<div class="a nw" style="left:1112px;top:439px;font-size:12.3px;font-weight:700;color:#1a1c21">Split metrics by</div>
<svg class="a" style="left:1203px;top:441px" width="11" height="11" viewBox="0 0 11 11"><circle cx="5.5" cy="5.5" r="4.8" fill="none" stroke="#69707d" stroke-width=".9"/><path d="M4 4.3a1.5 1.5 0 1 1 2 1.4c-.3.2-.5.4-.5.8v.4" fill="none" stroke="#69707d" stroke-width=".9"/><circle cx="5.5" cy="8" r=".55" fill="#69707d"/></svg>
<div class="a nw" style="left:1300px;top:439px;width:108px;text-align:right;font-size:12.3px;color:#69707d">Optional</div>
<div class="a" style="left:1112px;top:467px;width:296px;height:32px;border:1px dashed #c9d1de;border-radius:6px"></div>
<svg class="a" style="left:1124px;top:478px" width="10" height="10" viewBox="0 0 10 10"><path d="M5 0v10M0 5h10" stroke="#69707d" stroke-width="1.5"/></svg>
<div class="a nw" style="left:1145px;top:475px;font-size:14.6px;color:#69707d;letter-spacing:.33px;">Add or drag-and-drop a field</div>
<div class="a nw" style="left:1112px;top:533px;font-size:12.3px;font-weight:700;color:#1a1c21">Metrics</div>
<div class="a" style="left:1112px;top:560px;width:296px;height:32px;background:#fff;border-radius:6px;box-shadow:0 1px 1px rgba(0,0,0,.06)"></div>
<div class="a nw" style="left:1120px;top:569px;font-size:14.6px;color:#343741;letter-spacing:.15px">Sum of taxful_total_price</div>
<div class="a" style="left:1112px;top:600px;width:296px;height:32px;background:#fff;border-radius:6px;box-shadow:0 1px 1px rgba(0,0,0,.06)"></div>
<div class="a nw" style="left:1120px;top:609px;font-size:14.6px;color:#343741;letter-spacing:.15px">Count of records</div>
<div class="a" style="left:1112px;top:640px;width:296px;height:32px;background:#fff;border-radius:6px;box-shadow:0 1px 1px rgba(0,0,0,.06)"></div>
<div class="a nw" style="left:1120px;top:649px;font-size:14.6px;color:#343741;letter-spacing:.15px">Average of taxful_total_price</div>
<div class="a" style="left:1112px;top:680px;width:296px;height:32px;background:#fff;border-radius:6px;box-shadow:0 1px 1px rgba(0,0,0,.06)"></div>
<div class="a nw" style="left:1120px;top:689px;font-size:14.6px;color:#343741;letter-spacing:.15px">Sum of total_quantity</div>
<div class="a" style="left:1112px;top:720px;width:296px;height:32px;border:1px dashed #c9d1de;border-radius:6px"></div>
<svg class="a" style="left:1124px;top:731px" width="10" height="10" viewBox="0 0 10 10"><path d="M5 0v10M0 5h10" stroke="#69707d" stroke-width="1.5"/></svg>
<div class="a nw" style="left:1145px;top:728px;font-size:14.6px;color:#69707d;letter-spacing:.33px;text-decoration:underline;">Add or drag-and-drop a field</div>
</body></html>
